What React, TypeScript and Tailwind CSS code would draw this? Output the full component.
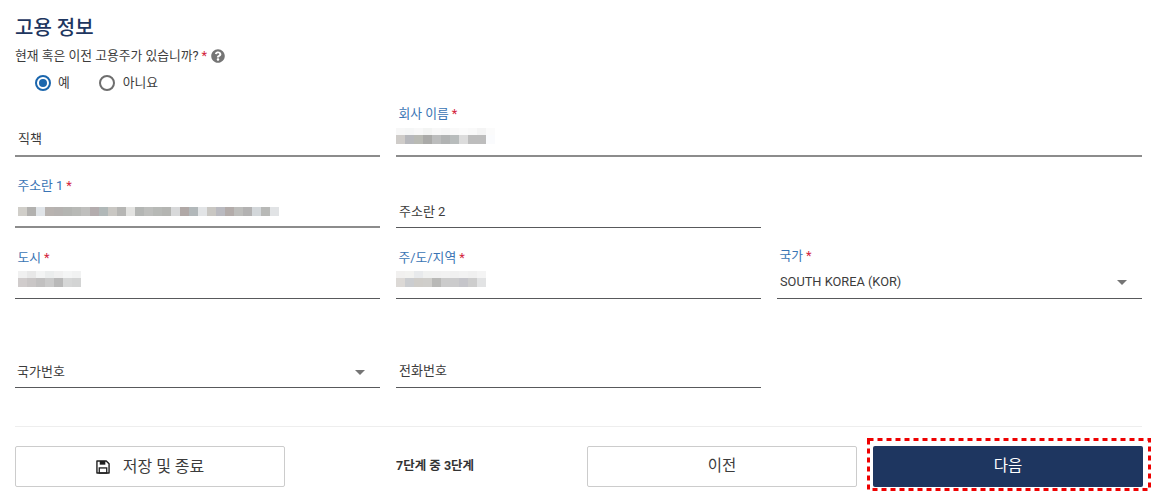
import React from 'react';
import { FaQuestionCircle } from 'react-icons/fa';

const FONT = "font-['Roboto','Noto_Sans_CJK_KR',sans-serif]";

// mosaic cells standing in for the blurred personal data
const ADDRESS_ROW = [
  'bg-[#d0cec9]', 'bg-[#b2b1af]', 'bg-[#e0e4e8]', 'bg-[#b8b3b0]', 'bg-[#b5b2b0]', 'bg-[#b4b5b2]', 'bg-[#b8b9b6]', 'bg-[#bfbfbd]',
  'bg-[#b3acad]', 'bg-[#b1b8b8]', 'bg-[#c9c7c3]', 'bg-[#b6b6b4]', 'bg-[#e3e3e1]', 'bg-[#b4b6b4]', 'bg-[#bdbebc]', 'bg-[#b7b9b6]',
  'bg-[#b4b5b2]', 'bg-[#d8d9da]', 'bg-[#b0a8a6]', 'bg-[#b2b8ba]', 'bg-[#e2e4e6]', 'bg-[#c9c7c3]', 'bg-[#babac0]', 'bg-[#b3acaa]',
  'bg-[#bdbdbb]', 'bg-[#b3b2b2]', 'bg-[#d3d7da]', 'bg-[#b8b9b7]', 'bg-[#e1e3e5]',
];
const CITY_TOP = ['bg-[#f0f0f0]', 'bg-[#e8e8e8]', 'bg-[#f3f4f4]', 'bg-[#ebeded]', 'bg-[#f0f0f0]', 'bg-[#f4f5f5]', 'bg-[#f1f2f2]'];
const CITY_ROW = ['bg-[#d0cccc]', 'bg-[#c9c6c6]', 'bg-[#c1c0c0]', 'bg-[#cacaca]', 'bg-[#b9b9b9]', 'bg-[#d6d7d7]', 'bg-[#d3d4d4]'];
const COMPANY_TOP = ['bg-[#f7f7f7]', 'bg-[#f5f6f6]', 'bg-[#f8f8f8]', 'bg-[#f3f4f3]', 'bg-[#f8f8f8]', 'bg-[#f6f6f6]', 'bg-[#f9f9f9]', 'bg-[#fbfbfb]', 'bg-[#f9f9f9]', 'bg-[#f4f4f4]', 'bg-[#fbfbfb]'];
const COMPANY_ROW = ['bg-[#cfccc9]', 'bg-[#b7b8bc]', 'bg-[#b9bab4]', 'bg-[#aaaaa8]', 'bg-[#bcbdbd]', 'bg-[#b1b3b3]', 'bg-[#b8bcbc]', 'bg-[#dcdcdc]', 'bg-[#bdbdbd]', 'bg-[#bdbdbd]', 'bg-[#fafbfd]'];
const STATE_TOP = ['bg-[#f1f0ef]', 'bg-[#f2f2f0]', 'bg-[#e8eaec]', 'bg-[#f0f1f0]', 'bg-[#f1f1f1]', 'bg-[#f2f2f2]', 'bg-[#f0f0f0]', 'bg-[#f2f2f2]', 'bg-[#f0f0f0]', 'bg-[#f4f4f4]'];
const STATE_ROW = ['bg-[#dcd9d6]', 'bg-[#cbcdd0]', 'bg-[#cfcdc9]', 'bg-[#cfcecb]', 'bg-[#b9b9b7]', 'bg-[#cbcbcb]', 'bg-[#cbcbcc]', 'bg-[#c5c5ca]', 'bg-[#cdcdcd]', 'bg-[#e2e3e4]'];

const MosaicRow: React.FC<{ cells: string[]; h: string }> = ({ cells, h }) => (
  <div className="flex">
    {cells.map((c, i) => (
      <div key={i} className={`w-[9px] ${h} ${c}`} />
    ))}
  </div>
);

const Star = () => <span className="text-[#d3243c] ml-[3px]">*</span>;

const Field: React.FC<{
  label: string;
  required?: boolean;
  floated?: boolean;
  thick?: boolean;
  className?: string;
  bodyClass?: string;
  plainClass?: string;
  children?: React.ReactNode;
}> = ({ label, required, floated, thick, className = '', bodyClass = 'h-[32px] pt-[4px]', plainClass = 'h-[25px]', children }) => (
  <div className={`flex flex-col justify-end ${thick ? 'border-b-2 border-[#8c8c8c]' : 'border-b border-[#58595b]'} ${className}`}>
    {floated ? (
      <>
        <div className="text-[12.8px] leading-[16px] text-[#3a74b4] pl-[2.5px]">
          {label}
          {required && <Star />}
        </div>
        <div className={bodyClass}>{children}</div>
      </>
    ) : (
      <div className={`${plainClass} pl-[3px] text-[13px] leading-[18px] text-[#3c3c3c]`}>{label}</div>
    )}
  </div>
);

const Arrow = () => <div className="w-0 h-0 border-x-[5px] border-x-transparent border-t-[5px] border-t-[#757575]" />;

const SaveIcon = () => (
  <svg width="14" height="14" viewBox="0 0 15 15" fill="none" className="mr-[13px]">
    <path d="M1 1H11L14 4V14H1Z" stroke="#1f1f1f" strokeWidth="1.5" strokeLinejoin="round" />
    <rect x="4" y="1" width="6" height="4" fill="#1f1f1f" />
    <rect x="3.5" y="8.5" width="8" height="5.5" stroke="#1f1f1f" strokeWidth="1.4" />
  </svg>
);

export default function App() {
  return (
    <div className={`${FONT} w-[1153px] h-[504px] bg-white pl-[15px] pr-[11px] overflow-hidden`}>
      <h1 className="text-[20px] leading-[26px] font-medium text-[#1e3660] pt-[15px] h-[40px]">고용 정보</h1>
      <div className="flex items-center h-[24px] mt-[4px] text-[12.8px] text-[#3c3c3c]">
        현재 혹은 이전 고용주가 있습니까?
        <Star />
        <FaQuestionCircle className="ml-[4px] text-[#757575] w-[14px] h-[14px]" />
      </div>
      <div className="flex items-center h-[24px] mt-[3px] pl-[20px] text-[12.8px] text-[#3c3c3c]">
        <span className="w-[16px] h-[16px] rounded-full border-2 border-[#1a66ad] flex items-center justify-center">
          <span className="w-[8px] h-[8px] rounded-full bg-[#1a66ad]" />
        </span>
        <span className="ml-[7px]">예</span>
        <span className="ml-[29px] w-[16px] h-[16px] rounded-full border-2 border-[#6e6e6e]" />
        <span className="ml-[8px]">아니요</span>
      </div>

      <div className="grid grid-cols-3 gap-x-[16px] mt-[-50px]">
        <Field label="직책" thick className="h-[73px] mt-[39px]" />
        <Field label="회사 이름" required floated thick className="col-span-2 h-[73px] mt-[39px]" bodyClass="h-[33px] pt-[6px]">
          <MosaicRow cells={COMPANY_TOP} h="h-[7px]" />
          <MosaicRow cells={COMPANY_ROW} h="h-[9px]" />
        </Field>
        <Field label="주소란 1" required floated thick className="h-[71px]">
          <div className="pl-[3px] pt-[9px]">
            <MosaicRow cells={ADDRESS_ROW} h="h-[9px]" />
          </div>
        </Field>
        <Field label="주소란 2" className="h-[71px]" plainClass="h-[24px]" />
        <div />
        <Field label="도시" required floated className="h-[71px]" bodyClass="h-[32px] pt-[5px]">
          <div className="pl-[3px]">
            <MosaicRow cells={CITY_TOP} h="h-[7px]" />
            <MosaicRow cells={CITY_ROW} h="h-[9px]" />
          </div>
        </Field>
        <Field label="주/도/지역" required floated className="h-[71px]" bodyClass="h-[32px] pt-[5px]">
          <MosaicRow cells={STATE_TOP} h="h-[7px]" />
          <MosaicRow cells={STATE_ROW} h="h-[9px]" />
        </Field>
        <Field label="국가" required floated className="h-[71px]" bodyClass="h-[34px] pt-[9px]">
          <div className="flex items-center justify-between h-[18px] pl-[3px] pr-[15px] text-[12.8px] text-[#3c3c3c]">
            SOUTH KOREA (KOR)
            <Arrow />
          </div>
        </Field>
        <div className="h-[89px] flex flex-col justify-end border-b border-[#58595b]">
          <div className="flex items-center justify-between h-[27px] pb-[3px] pl-[2px] pr-[15px] text-[13px] text-[#3c3c3c]">
            국가번호
            <Arrow />
          </div>
        </div>
        <Field label="전화번호" className="h-[89px]" />
        <div />
      </div>

      <div className="border-t border-[#eeeeee] mt-[38px] pt-[19px] flex items-center">
        <button className="shrink-0 w-[270px] h-[41px] rounded-[2px] border border-[#cccccc] bg-white flex items-center justify-center text-[16px] text-[#3c3c3c]">
          <SaveIcon />
          저장 및 종료
        </button>
        <div className="shrink-0 w-[302px] pl-[111px] text-[12.5px] font-bold text-[#333333]">7단계 중 3단계</div>
        <button className="shrink-0 w-[270px] h-[41px] rounded-[2px] border border-[#cccccc] bg-white text-[15.5px] text-[#3c3c3c]">이전</button>
        <div className="relative shrink-0 ml-[16px]">
          <button className="block w-[270px] h-[41px] rounded-[2px] bg-[#1e3660] text-[15.5px] text-white">다음</button>
          <svg className="absolute left-[-6px] top-[-8px] w-[284px] h-[53px] pointer-events-none" viewBox="0 0 284 53" fill="none">
            <rect x="1.5" y="1.5" width="281" height="50" stroke="#ee0000" strokeWidth="3" strokeDasharray="5 4" />
          </svg>
        </div>
      </div>
    </div>
  );
}
